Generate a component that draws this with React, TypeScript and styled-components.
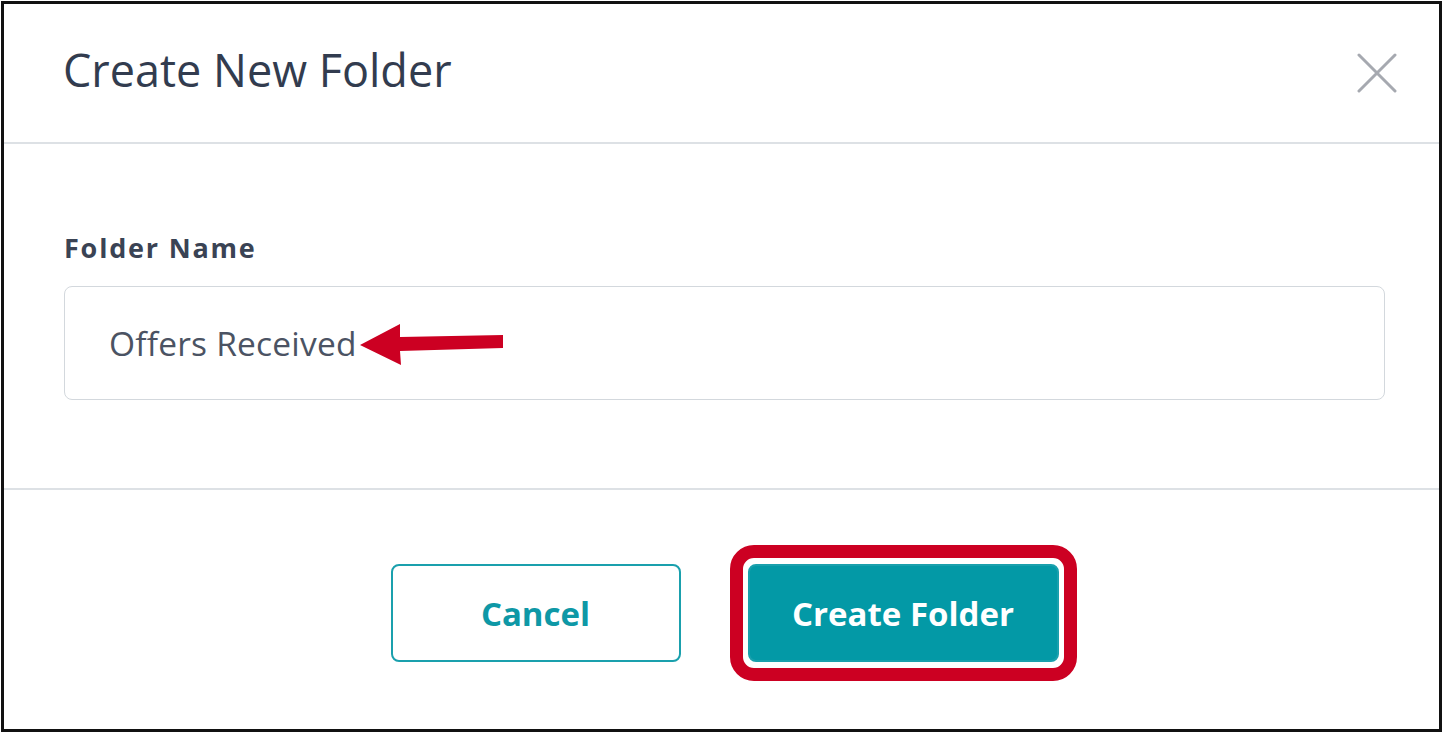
import React from 'react';
import styled, { createGlobalStyle } from 'styled-components';

const GlobalStyle = createGlobalStyle`
    html, body {
        margin: 0;
        padding: 0;
        background: #fff;
    }
    body {
        font-family: "Open Sans", Lato, Arial, sans-serif;
    }
`;

const Frame = styled.div`
    width: 1441px;
    height: 731px;
    margin: 1px 0 0 1px;
    border: 3px solid #111;
    box-sizing: border-box;
    display: flex;
    flex-direction: column;
    background: #fff;
`;

const Header = styled.div`
    height: 140px;
    display: flex;
    align-items: center;
    justify-content: space-between;
    padding: 0 41px 8px 59px;
    box-sizing: border-box;
    border-bottom: 2px solid #dde1e5;
    flex-shrink: 0;
`;

const Title = styled.h1`
    margin: 0;
    font-size: 45px;
    font-weight: 400;
    color: #323c4f;
`;

const CloseButton = styled.button`
    border: 0;
    background: none;
    padding: 0;
    width: 42px;
    height: 42px;
    margin-top: 8px;
    display: flex;
    align-items: center;
    justify-content: center;
    cursor: pointer;
`;

const Body = styled.div`
    padding: 88px 54px 88px 60px;
    border-bottom: 2px solid #dde1e5;
`;

const Label = styled.label`
    display: block;
    font-size: 27px;
    line-height: 1.2;
    font-weight: 700;
    letter-spacing: 1.8px;
    color: #3a4354;
    margin-bottom: 22px;
`;

const InputWrap = styled.div`
    position: relative;
`;

const TextInput = styled.input`
    display: block;
    width: 100%;
    height: 114px;
    box-sizing: border-box;
    border: 1.5px solid #d3d8dd;
    border-radius: 8px;
    padding: 0 44px;
    font-family: "Open Sans", Lato, Arial, sans-serif;
    font-size: 33.5px;
    letter-spacing: 0.2px;
    color: #4b5363;
    background: #fff;
    outline: none;
`;

const Arrow = styled.svg`
    position: absolute;
    left: 294px;
    top: 36px;
`;

const Footer = styled.div`
    flex: 1;
    display: flex;
    justify-content: center;
    align-items: flex-start;
    gap: 49px;
    padding: 55px 0 0 24px;
`;

const Button = styled.button<{ primary?: boolean }>`
    height: 98px;
    width: ${(props) => (props.primary ? '311px' : '290px')};
    margin-top: ${(props) => (props.primary ? '0' : '19px')};
    box-sizing: border-box;
    border-radius: 8px;
    border: 2px solid #1aa0ad;
    background: ${(props) => (props.primary ? '#0399a6' : '#fff')};
    color: ${(props) => (props.primary ? '#fff' : '#0e98a6')};
    font-family: "Open Sans", Lato, Arial, sans-serif;
    font-size: 33px;
    font-weight: 700;
    cursor: pointer;
`;

const Highlight = styled.div`
    border: 13px solid #cc0022;
    border-radius: 24px;
    padding: 6px 5px;
    display: flex;
`;

const App: React.FC = () => (
    <>
        <GlobalStyle />
        <Frame>
            <Header>
                <Title>Create New Folder</Title>
                <CloseButton aria-label="Close">
                    <svg width="40" height="40" viewBox="0 0 40 40">
                        <path d="M2 2 L38 38 M38 2 L2 38" stroke="#a6a9b0" strokeWidth="3" strokeLinecap="round" />
                    </svg>
                </CloseButton>
            </Header>
            <Body>
                <Label>Folder Name</Label>
                <InputWrap>
                    <TextInput defaultValue="Offers Received" />
                    <Arrow width="150" height="44" viewBox="0 0 150 44">
                        <polygon points="2,23 42,2 42,15 145,13 145,26 42,29 43,43" fill="#cc0022" />
                    </Arrow>
                </InputWrap>
            </Body>
            <Footer>
                <Button>Cancel</Button>
                <Highlight>
                    <Button primary>Create Folder</Button>
                </Highlight>
            </Footer>
        </Frame>
    </>
);

export default App;
